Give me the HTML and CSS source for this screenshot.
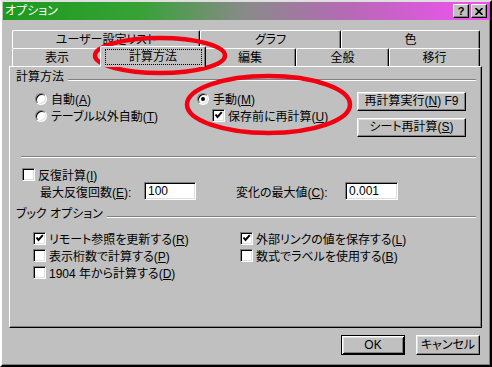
FILE: index.html
```html
<!DOCTYPE html>
<html lang="ja">
<head>
    <meta charset="UTF-8">
    <title>オプション</title>
    <link rel="stylesheet" href="styles.css">
</head>
<body>
    <div class="window">
        <div class="titlebar">
            <span class="title">オプション</span>
            <div class="title-buttons">
                <span class="tbtn help">?</span>
                <span class="tbtn">
                    <svg width="8" height="7" viewBox="0 0 8 7"><path d="M0.5 0 L7.5 7 M7.5 0 L0.5 7" stroke="#000" stroke-width="1.6"/></svg>
                </span>
            </div>
        </div>

        <div class="content">
            <div class="tabs">
                <div class="tab-row">
                    <div class="tab tab-user">ユーザー設定リスト</div>
                    <div class="tab tab-graph">グラフ</div>
                    <div class="tab tab-color">色</div>
                </div>
                <div class="tab-row">
                    <div class="tab tab-view">表示</div>
                    <div class="tab tab-calc active"><span class="focus">計算方法</span></div>
                    <div class="tab tab-edit">編集</div>
                    <div class="tab tab-general">全般</div>
                    <div class="tab tab-move">移行</div>
                </div>
            </div>

            <div class="panel">
                <div class="group-head">
                    <span>計算方法</span>
                    <div class="line"></div>
                </div>
                <div class="calc">
                    <div class="col col-auto">
                        <label class="opt"><span class="radio"></span><span>自動(<u>A</u>)</span></label>
                        <label class="opt"><span class="radio"></span><span>テーブル以外自動(<u>T</u>)</span></label>
                    </div>
                    <div class="col col-manual">
                        <label class="opt"><span class="radio on"></span><span>手動(<u>M</u>)</span></label>
                        <label class="opt sub"><span class="check on"></span><span>保存前に再計算(<u>U</u>)</span></label>
                    </div>
                    <div class="col col-btns">
                        <button class="btn">再計算実行(<u>N</u>) F9</button>
                        <button class="btn">シート再計算(<u>S</u>)</button>
                    </div>
                </div>

                <div class="sep"></div>

                <label class="opt iter"><span class="check"></span><span>反復計算(<u>I</u>)</span></label>
                <div class="iter-row">
                    <span class="field-label max-count">最大反復回数(<u>E</u>):</span>
                    <span class="input in-count">100</span>
                    <span class="field-label max-change">変化の最大値(<u>C</u>):</span>
                    <span class="input in-change">0.001</span>
                </div>

                <div class="group-head book">
                    <span>ブック オプション</span>
                    <div class="line"></div>
                </div>
                <div class="book-opts">
                    <div class="col col-book-left">
                        <label class="opt"><span class="check on"></span><span>リモート参照を更新する(<u>R</u>)</span></label>
                        <label class="opt"><span class="check"></span><span>表示桁数で計算する(<u>P</u>)</span></label>
                        <label class="opt"><span class="check"></span><span>1904 年から計算する(<u>D</u>)</span></label>
                    </div>
                    <div class="col">
                        <label class="opt"><span class="check on"></span><span>外部リンクの値を保存する(<u>L</u>)</span></label>
                        <label class="opt"><span class="check"></span><span>数式でラベルを使用する(<u>B</u>)</span></label>
                    </div>
                </div>
            </div>

            <div class="footer">
                <button class="btn btn-foot default">OK</button>
                <button class="btn btn-foot">キャンセル</button>
            </div>
        </div>

        <!-- red marks drawn over the screenshot -->
        <svg class="marks" width="492" height="367" viewBox="0 0 492 367">
            <ellipse cx="160" cy="55.5" rx="65" ry="17.5" fill="none" stroke="#f00010" stroke-width="4.5"/>
            <ellipse cx="268.5" cy="104.5" rx="81.5" ry="28.5" fill="none" stroke="#f00010" stroke-width="4.5"/>
        </svg>
    </div>
</body>
</html>
```

FILE: styles.css
```css
body {
    margin: 0;
    padding: 0;
    background-color: #c0c0c0;
    font-family: "Liberation Sans", "Noto Sans CJK JP", sans-serif;
    font-size: 12px;
    color: #000;
    font-feature-settings: "palt";
}

.window {
    position: relative;
    width: 492px;
    height: 367px;
    box-sizing: border-box;
    background-color: #c0c0c0;
    border: 2px solid;
    border-color: #dfdfdf #000 #000 #fff;
    box-shadow: inset -1px -1px #808080;
    padding: 0 1px 1px 1px;
}

.titlebar {
    height: 18px;
    display: flex;
    align-items: center;
    justify-content: space-between;
    background: linear-gradient(to right, #1c9a1c 0%, #36a236 28%, #8a8a8a 50%, #b868b8 72%, #f450f4 100%);
    padding: 0 2px 0 2px;
}

.title {
    color: #fff;
    line-height: 18px;
}

.title-buttons {
    display: flex;
    gap: 2px;
}

.tbtn {
    width: 16px;
    height: 14px;
    box-sizing: border-box;
    background-color: #c0c0c0;
    border: 1px solid;
    border-color: #fff #000 #000 #fff;
    box-shadow: inset -1px -1px #808080;
    display: flex;
    align-items: center;
    justify-content: center;
}

.tbtn.help {
    font-weight: bold;
    font-size: 11px;
    line-height: 12px;
}

.content {
    padding: 10px 7px 0 6px;
}

.tabs {
    padding: 0 2px 0 3px;
}

.tab-row {
    display: flex;
    height: 18px;
    align-items: flex-start;
}

.tab {
    height: 18px;
    box-sizing: border-box;
    border-top: 1px solid #fff;
    border-left: 1px solid #fff;
    border-right: 1px solid #000;
    border-radius: 2px 2px 0 0;
    box-shadow: inset -1px 0 #808080;
    background-color: #c0c0c0;
    display: flex;
    align-items: center;
    justify-content: center;
    line-height: 14px;
}

.tab-user { width: 188px; }
.tab-graph { width: 141px; }
.tab-color { width: 139px; }
.tab-view { width: 90px; }
.tab-calc { width: 102px; }
.tab-edit { width: 92px; }
.tab-general { width: 93px; }
.tab-move { width: 91px; }

.tab.active {
    width: 106px;
    height: 21px;
    margin: -2px -2px 0 -2px;
    padding-bottom: 3px;
    z-index: 1;
}

.focus {
    display: block;
    width: 95px;
    height: 14px;
    text-align: center;
    outline: 1px dotted #000;
    margin-top: 2px;
}

.panel {
    height: 262px;
    box-sizing: border-box;
    border: 1px solid;
    border-color: #fff #000 #000 #fff;
    box-shadow: inset -1px -1px #808080;
    padding: 3px 5px 0 6px;
}

.group-head {
    display: flex;
    align-items: flex-start;
    height: 14px;
    line-height: 14px;
}

.group-head .line {
    flex: 1;
    margin: 9px 0 0 4px;
    border-top: 1px solid #808080;
    border-bottom: 1px solid #fff;
}

.calc {
    display: flex;
    margin-top: 6px;
}

.col {
    display: flex;
    flex-direction: column;
}

.col-auto {
    width: 162px;
    margin-left: 19px;
}

.col-manual {
    width: 160px;
}

.col-btns {
    padding-top: 2px;
    gap: 7px;
}

.opt {
    display: flex;
    align-items: center;
    height: 17px;
    gap: 4px;
    white-space: nowrap;
}

.opt.sub {
    margin-left: 15px;
    gap: 3px;
}

.radio {
    width: 12px;
    height: 12px;
    box-sizing: border-box;
    border-radius: 50%;
    background-color: #fff;
    border: 1px solid;
    border-color: #808080 #fff #fff #808080;
    box-shadow: inset 1px 1px #000, inset -1px -1px #dfdfdf;
    display: flex;
    align-items: center;
    justify-content: center;
}

.radio.on::after {
    content: "";
    width: 4px;
    height: 4px;
    border-radius: 50%;
    background-color: #000;
}

.check {
    width: 13px;
    height: 13px;
    box-sizing: border-box;
    background-color: #fff;
    border: 1px solid;
    border-color: #808080 #fff #fff #808080;
    box-shadow: inset 1px 1px #000, inset -1px -1px #dfdfdf;
    flex: none;
}

.check.on {
    background-image: url("data:image/svg+xml,%3Csvg xmlns='http://www.w3.org/2000/svg' width='11' height='11'%3E%3Cpath d='M2.5 4.5 L4.5 7 L8.8 2.2' fill='none' stroke='%23000' stroke-width='2'/%3E%3C/svg%3E");
    background-repeat: no-repeat;
    background-position: 0 0;
}

.btn {
    font-family: "Liberation Sans", "Noto Sans CJK JP", sans-serif;
    font-feature-settings: "palt";
    font-size: 12px;
    color: #000;
    width: 109px;
    height: 19px;
    padding: 0;
    box-sizing: border-box;
    background-color: #c0c0c0;
    border: 1px solid;
    border-color: #fff #000 #000 #fff;
    box-shadow: inset -1px -1px #808080, inset 1px 1px #dfdfdf;
    line-height: 15px;
}

.sep {
    margin: 19px 0 0 5px;
    border-top: 1px solid #808080;
    border-bottom: 1px solid #fff;
}

.iter {
    margin: 8px 0 0 6px;
    gap: 3px;
}

.iter-row {
    display: flex;
    align-items: center;
    height: 18px;
    margin-top: -1px;
}

.field-label {
    white-space: nowrap;
}

.max-count {
    width: 104px;
    margin-left: 24px;
}

.max-change {
    width: 109px;
    margin-left: 40px;
}

.input {
    height: 18px;
    box-sizing: border-box;
    background-color: #fff;
    border: 1px solid;
    border-color: #808080 #fff #fff #808080;
    box-shadow: inset 1px 1px #000, inset -1px -1px #dfdfdf;
    font-size: 12px;
    line-height: 16px;
    padding-left: 3px;
}

.in-count { width: 52px; }
.in-change { width: 53px; }

.group-head.book {
    margin-top: 7px;
}

.book-opts {
    display: flex;
    margin-top: 9px;
}

.book-opts .opt {
    gap: 3px;
}

.col-book-left {
    width: 207px;
    margin-left: 17px;
}

.footer {
    display: flex;
    justify-content: flex-end;
    gap: 11px;
    margin: 7px 2px 0 0;
}

.btn-foot {
    width: 64px;
    height: 20px;
}

.btn.default {
    border: 1px solid #000;
    box-shadow: inset 1px 1px #fff, inset -1px -1px #000, inset 2px 2px #dfdfdf, inset -2px -2px #808080;
}

.marks {
    position: absolute;
    top: -2px;
    left: -2px;
    pointer-events: none;
}
```
